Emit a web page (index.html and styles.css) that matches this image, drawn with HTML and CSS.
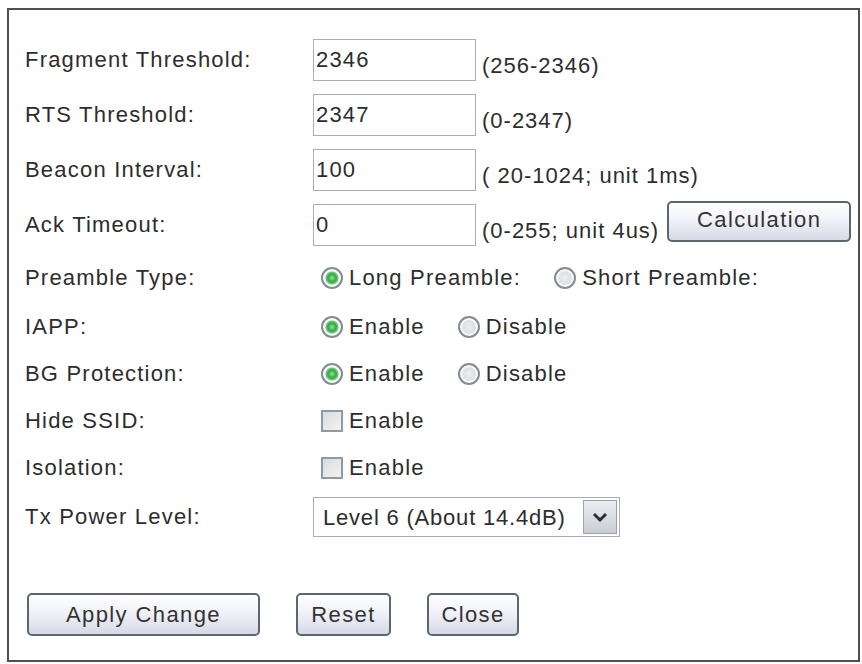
FILE: index.html
```html
<!DOCTYPE html>
<html lang="en">
<head>
  <meta charset="UTF-8">
  <title>Advanced Settings</title>
  <link rel="stylesheet" href="styles.css">
</head>
<body>
  <form class="panel">
    <div class="row field">
      <span class="label">Fragment Threshold:</span>
      <input class="text-box" type="text" value="2346">
      <span class="hint">(256-2346)</span>
    </div>
    <div class="row field">
      <span class="label">RTS Threshold:</span>
      <input class="text-box" type="text" value="2347">
      <span class="hint">(0-2347)</span>
    </div>
    <div class="row field">
      <span class="label">Beacon Interval:</span>
      <input class="text-box" type="text" value="100">
      <span class="hint">( 20-1024; unit 1ms)</span>
    </div>
    <div class="row field">
      <span class="label">Ack Timeout:</span>
      <input class="text-box" type="text" value="0">
      <span class="hint">(0-255; unit 4us)</span>
      <button type="button" class="btn btn-calc">Calculation</button>
    </div>

    <div class="row preamble">
      <span class="label">Preamble Type:</span>
      <label class="option"><input type="radio" name="preamble" checked>Long Preamble:</label>
      <label class="option"><input type="radio" name="preamble">Short Preamble:</label>
    </div>
    <div class="row choice">
      <span class="label">IAPP:</span>
      <label class="option"><input type="radio" name="iapp" checked>Enable</label>
      <label class="option"><input type="radio" name="iapp">Disable</label>
    </div>
    <div class="row choice">
      <span class="label">BG Protection:</span>
      <label class="option"><input type="radio" name="bg" checked>Enable</label>
      <label class="option"><input type="radio" name="bg">Disable</label>
    </div>
    <div class="row choice">
      <span class="label">Hide SSID:</span>
      <label class="option"><input type="checkbox">Enable</label>
    </div>
    <div class="row choice">
      <span class="label">Isolation:</span>
      <label class="option"><input type="checkbox">Enable</label>
    </div>
    <div class="row power">
      <span class="label">Tx Power Level:</span>
      <div class="select-box">
        <select>
          <option>Level 6 (About 14.4dB)</option>
        </select>
        <span class="arrow">
          <svg width="16" height="12" viewBox="0 0 16 12"><path d="M2 3 L8 9 L14 3" fill="none" stroke="#2b2f36" stroke-width="3"/></svg>
        </span>
      </div>
    </div>

    <div class="actions">
      <button type="button" class="btn btn-apply">Apply Change</button>
      <button type="button" class="btn btn-reset">Reset</button>
      <button type="button" class="btn btn-close">Close</button>
    </div>
  </form>
</body>
</html>
```

FILE: styles.css
```css
body {
  margin: 0;
  padding: 0;
  background-color: #fff;
  font-family: "Liberation Sans", Arial, sans-serif;
  font-size: 22px;
  letter-spacing: 1.2px;
  color: #2d2d2d;
}

.panel {
  box-sizing: border-box;
  width: 853px;
  height: 654px;
  margin: 8px 0 0 7px;
  padding: 22px 16px 0 16px;
  border: 2px solid #4f4f4f;
}

.row {
  display: flex;
  align-items: center;
  white-space: nowrap;
}

.label {
  width: 288px;
  flex: none;
}

.field {
  height: 55px;
}

.preamble {
  height: 51px;
}

.choice {
  height: 47px;
}

.power {
  height: 52px;
}

.text-box {
  box-sizing: border-box;
  flex: none;
  width: 163px;
  height: 42px;
  margin: 0;
  padding: 0 2px;
  border: 1px solid #adadad;
  font-family: inherit;
  font-size: 22px;
  letter-spacing: 1.2px;
  color: #2d2d2d;
  outline: none;
}

.hint {
  flex: none;
  margin: 12px 0 0 6px;
  letter-spacing: 1px;
}

.btn {
  box-sizing: border-box;
  flex: none;
  height: 43px;
  padding: 0;
  border: 2px solid #5b6671;
  border-radius: 5px;
  background: linear-gradient(#ffffff, #f1f2f8 45%, #d6d9e6);
  font-family: inherit;
  font-size: 22px;
  letter-spacing: 1.4px;
  color: #333;
}

.btn-calc {
  width: 184px;
  height: 41px;
  margin: -6px 0 0 8px;
  padding-bottom: 4px;
}

.option {
  display: flex;
  align-items: center;
  margin-left: 8px;
}

.option + .option {
  margin-left: 33px;
}

.option input {
  appearance: none;
  -webkit-appearance: none;
  box-sizing: border-box;
  flex: none;
  width: 22px;
  height: 22px;
  margin: 0 6px 0 0;
}

.option input[type="radio"] {
  border: 2px solid #868c93;
  border-radius: 50%;
  background: radial-gradient(circle, #eceef0 0, #cfd3d7 100%);
  box-shadow: inset 0 0 0 2px #fbfbfb;
}

.option input[type="radio"]:checked {
  background: radial-gradient(circle, #8fe68f 0, #34a745 4px, #6ccd76 6px, #e9eeea 7px, #cfd3d7 100%);
}

.option input[type="checkbox"] {
  border: 2px solid #8d9aa8;
  background: linear-gradient(135deg, #d5dce4, #f7f2ea);
}

.select-box {
  display: flex;
  box-sizing: border-box;
  width: 307px;
  height: 40px;
  border: 1px solid #a7adb3;
}

.select-box select {
  appearance: none;
  -webkit-appearance: none;
  flex: 1;
  min-width: 0;
  height: 100%;
  padding: 0 0 0 9px;
  border: none;
  background: #fff;
  font-family: inherit;
  font-size: 22px;
  letter-spacing: 0.8px;
  color: #2d2d2d;
  outline: none;
}

.arrow {
  display: flex;
  align-items: center;
  justify-content: center;
  width: 32px;
  margin: 2px;
  border: 1px solid #9aa1a8;
  background: linear-gradient(#eceef1, #c9cdd4);
}

.actions {
  display: flex;
  margin-top: 50px;
  padding-left: 2px;
}

.btn-apply {
  width: 233px;
}

.btn-reset {
  width: 95px;
  margin-left: 36px;
}

.btn-close {
  width: 92px;
  margin-left: 36px;
}
```
